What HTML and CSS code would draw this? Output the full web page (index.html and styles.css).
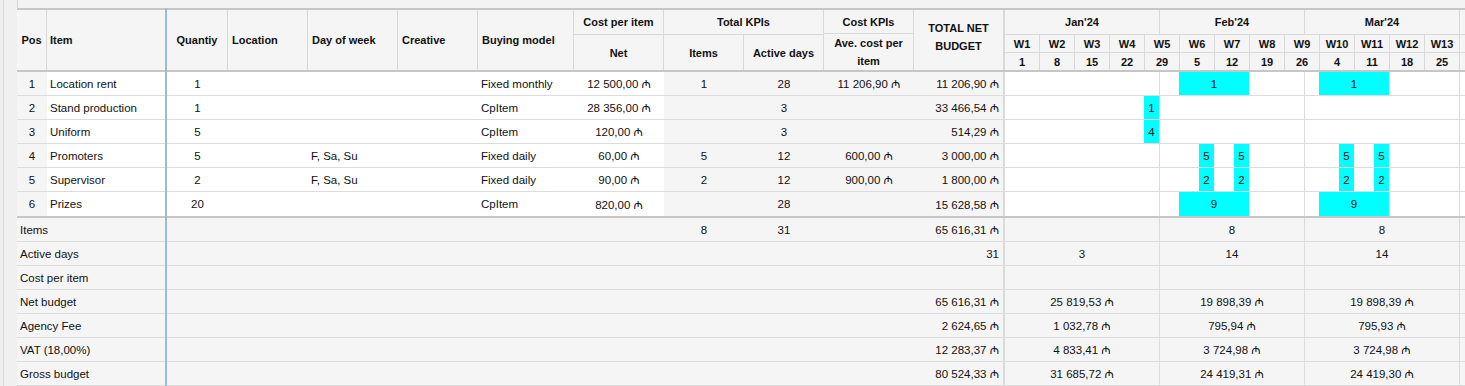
FILE: index.html
```html
<!DOCTYPE html>
<html lang="en">
<head>
<meta charset="utf-8">
<title>Media plan</title>
<link rel="stylesheet" href="styles.css">
</head>
<body>
<div class="app">
  <div class="gutter"></div>
  <div class="sheet">
    <div class="topstrip"></div>
    <div class="rule"><div class="rule-l"></div><div class="split"></div><div class="rule-r"></div></div>

    <div class="hdr">
      <div class="hc c-pos center"><span>Pos</span></div>
      <div class="hc c-item noborder"><span>Item</span></div>
      <div class="split"></div>
      <div class="hc c-qty center"><span>Quantiy</span></div>
      <div class="hc c-loc"><span>Location</span></div>
      <div class="hc c-dow"><span>Day of week</span></div>
      <div class="hc c-cre"><span>Creative</span></div>
      <div class="hc c-buy"><span>Buying model</span></div>
      <div class="grp">
        <div class="gtop c-cpi">Cost per item</div>
        <div class="gsub"><div class="hc c-cpi center"><span>Net</span></div></div>
      </div>
      <div class="grp">
        <div class="gtop c-kpi">Total KPIs</div>
        <div class="gsub">
          <div class="hc c-kit center"><span>Items</span></div>
          <div class="hc c-kday center"><span>Active days</span></div>
        </div>
      </div>
      <div class="grp">
        <div class="gtop c-ckpi">Cost KPIs</div>
        <div class="gsub"><div class="hc c-ckpi center"><span>Ave. cost per<br>item</span></div></div>
      </div>
      <div class="hc c-tot center total-h"><span>TOTAL NET<br>BUDGET</span></div>
      <div class="thead">
        <div class="tr tr-m">
          <div class="tm w31">Jan'24</div>
          <div class="tm w29">Feb'24</div>
          <div class="tm w31">Mar'24</div>
          <div class="tm w30"></div>
        </div>
        <div class="tr tr-w">
          <div class="wk">W1</div><div class="wk">W2</div><div class="wk">W3</div><div class="wk">W4</div><div class="wk">W5</div>
          <div class="wk">W6</div><div class="wk">W7</div><div class="wk">W8</div><div class="wk">W9</div>
          <div class="wk">W10</div><div class="wk">W11</div><div class="wk">W12</div><div class="wk">W13</div><div class="wk"></div>
        </div>
        <div class="tr tr-d">
          <div class="wk">1</div><div class="wk">8</div><div class="wk">15</div><div class="wk">22</div><div class="wk">29</div>
          <div class="wk">5</div><div class="wk">12</div><div class="wk">19</div><div class="wk">26</div>
          <div class="wk">4</div><div class="wk">11</div><div class="wk">18</div><div class="wk">25</div><div class="wk"></div>
        </div>
      </div>
    </div>

    <div class="rule"><div class="rule-l"></div><div class="split"></div><div class="rule-r"></div></div>

    <div class="body">
      <div class="row">
        <div class="dc c-pos g center">1</div>
        <div class="dc c-item">Location rent</div>
        <div class="split"></div>
        <div class="dc c-qty center">1</div>
        <div class="dc c-loc"></div>
        <div class="dc c-dow"></div>
        <div class="dc c-cre"></div>
        <div class="dc c-buy">Fixed monthly</div>
        <div class="dc c-cpi center">12 500,00 ₼</div>
        <div class="dc c-kit g center">1</div>
        <div class="dc c-kday g center">28</div>
        <div class="dc c-ckpi g center">11 206,90 ₼</div>
        <div class="dc c-tot g right">11 206,90 ₼</div>
        <div class="tl">
          <div class="mc m1"></div><div class="mc m2"></div><div class="mc m3"></div><div class="mc m4"></div>
          <div class="bar" style="grid-column: 36 / span 14">1</div>
          <div class="bar" style="grid-column: 64 / span 14">1</div>
        </div>
      </div>
      <div class="row">
        <div class="dc c-pos g center">2</div>
        <div class="dc c-item">Stand production</div>
        <div class="split"></div>
        <div class="dc c-qty center">1</div>
        <div class="dc c-loc"></div>
        <div class="dc c-dow"></div>
        <div class="dc c-cre"></div>
        <div class="dc c-buy">CpItem</div>
        <div class="dc c-cpi center">28 356,00 ₼</div>
        <div class="dc c-kit g center"></div>
        <div class="dc c-kday g center">3</div>
        <div class="dc c-ckpi g center"></div>
        <div class="dc c-tot g right">33 466,54 ₼</div>
        <div class="tl">
          <div class="mc m1"></div><div class="mc m2"></div><div class="mc m3"></div><div class="mc m4"></div>
          <div class="bar" style="grid-column: 29 / span 3">1</div>
        </div>
      </div>
      <div class="row">
        <div class="dc c-pos g center">3</div>
        <div class="dc c-item">Uniform</div>
        <div class="split"></div>
        <div class="dc c-qty center">5</div>
        <div class="dc c-loc"></div>
        <div class="dc c-dow"></div>
        <div class="dc c-cre"></div>
        <div class="dc c-buy">CpItem</div>
        <div class="dc c-cpi center">120,00 ₼</div>
        <div class="dc c-kit g center"></div>
        <div class="dc c-kday g center">3</div>
        <div class="dc c-ckpi g center"></div>
        <div class="dc c-tot g right">514,29 ₼</div>
        <div class="tl">
          <div class="mc m1"></div><div class="mc m2"></div><div class="mc m3"></div><div class="mc m4"></div>
          <div class="bar" style="grid-column: 29 / span 3">4</div>
        </div>
      </div>
      <div class="row">
        <div class="dc c-pos g center">4</div>
        <div class="dc c-item">Promoters</div>
        <div class="split"></div>
        <div class="dc c-qty center">5</div>
        <div class="dc c-loc"></div>
        <div class="dc c-dow">F, Sa, Su</div>
        <div class="dc c-cre"></div>
        <div class="dc c-buy">Fixed daily</div>
        <div class="dc c-cpi center">60,00 ₼</div>
        <div class="dc c-kit g center">5</div>
        <div class="dc c-kday g center">12</div>
        <div class="dc c-ckpi g center">600,00 ₼</div>
        <div class="dc c-tot g right">3 000,00 ₼</div>
        <div class="tl">
          <div class="mc m1"></div><div class="mc m2"></div><div class="mc m3"></div><div class="mc m4"></div>
          <div class="bar" style="grid-column: 40 / span 3">5</div>
          <div class="bar" style="grid-column: 47 / span 3">5</div>
          <div class="bar" style="grid-column: 68 / span 3">5</div>
          <div class="bar" style="grid-column: 75 / span 3">5</div>
        </div>
      </div>
      <div class="row">
        <div class="dc c-pos g center">5</div>
        <div class="dc c-item">Supervisor</div>
        <div class="split"></div>
        <div class="dc c-qty center">2</div>
        <div class="dc c-loc"></div>
        <div class="dc c-dow">F, Sa, Su</div>
        <div class="dc c-cre"></div>
        <div class="dc c-buy">Fixed daily</div>
        <div class="dc c-cpi center">90,00 ₼</div>
        <div class="dc c-kit g center">2</div>
        <div class="dc c-kday g center">12</div>
        <div class="dc c-ckpi g center">900,00 ₼</div>
        <div class="dc c-tot g right">1 800,00 ₼</div>
        <div class="tl">
          <div class="mc m1"></div><div class="mc m2"></div><div class="mc m3"></div><div class="mc m4"></div>
          <div class="bar" style="grid-column: 40 / span 3">2</div>
          <div class="bar" style="grid-column: 47 / span 3">2</div>
          <div class="bar" style="grid-column: 68 / span 3">2</div>
          <div class="bar" style="grid-column: 75 / span 3">2</div>
        </div>
      </div>
      <div class="row">
        <div class="dc c-pos g center">6</div>
        <div class="dc c-item">Prizes</div>
        <div class="split"></div>
        <div class="dc c-qty center">20</div>
        <div class="dc c-loc"></div>
        <div class="dc c-dow"></div>
        <div class="dc c-cre"></div>
        <div class="dc c-buy">CpItem</div>
        <div class="dc c-cpi center">820,00 ₼</div>
        <div class="dc c-kit g center"></div>
        <div class="dc c-kday g center">28</div>
        <div class="dc c-ckpi g center"></div>
        <div class="dc c-tot g right">15 628,58 ₼</div>
        <div class="tl">
          <div class="mc m1"></div><div class="mc m2"></div><div class="mc m3"></div><div class="mc m4"></div>
          <div class="bar" style="grid-column: 36 / span 14">9</div>
          <div class="bar" style="grid-column: 64 / span 14">9</div>
        </div>
      </div>
    </div>

    <div class="rule"><div class="rule-l"></div><div class="split"></div><div class="rule-r"></div></div>

    <div class="summary">
      <div class="row">
        <div class="dc c-lbl">Items</div>
        <div class="split"></div>
        <div class="dc c-mid"></div>
        <div class="dc c-kit center">8</div>
        <div class="dc c-kday center">31</div>
        <div class="dc c-ckpi"></div>
        <div class="dc c-tot right">65 616,31 ₼</div>
        <div class="tl">
          <div class="mc m1"></div><div class="mc m2">8</div><div class="mc m3">8</div><div class="mc m4"></div>
        </div>
      </div>
      <div class="row">
        <div class="dc c-lbl">Active days</div>
        <div class="split"></div>
        <div class="dc c-mid"></div>
        <div class="dc c-kit"></div>
        <div class="dc c-kday"></div>
        <div class="dc c-ckpi"></div>
        <div class="dc c-tot right">31</div>
        <div class="tl">
          <div class="mc m1">3</div><div class="mc m2">14</div><div class="mc m3">14</div><div class="mc m4"></div>
        </div>
      </div>
      <div class="row">
        <div class="dc c-lbl">Cost per item</div>
        <div class="split"></div>
        <div class="dc c-mid"></div>
        <div class="dc c-kit"></div>
        <div class="dc c-kday"></div>
        <div class="dc c-ckpi"></div>
        <div class="dc c-tot right"></div>
        <div class="tl">
          <div class="mc m1"></div><div class="mc m2"></div><div class="mc m3"></div><div class="mc m4"></div>
        </div>
      </div>
      <div class="row">
        <div class="dc c-lbl">Net budget</div>
        <div class="split"></div>
        <div class="dc c-mid"></div>
        <div class="dc c-kit"></div>
        <div class="dc c-kday"></div>
        <div class="dc c-ckpi"></div>
        <div class="dc c-tot right">65 616,31 ₼</div>
        <div class="tl">
          <div class="mc m1">25 819,53 ₼</div><div class="mc m2">19 898,39 ₼</div><div class="mc m3">19 898,39 ₼</div><div class="mc m4"></div>
        </div>
      </div>
      <div class="row">
        <div class="dc c-lbl">Agency Fee</div>
        <div class="split"></div>
        <div class="dc c-mid"></div>
        <div class="dc c-kit"></div>
        <div class="dc c-kday"></div>
        <div class="dc c-ckpi"></div>
        <div class="dc c-tot right">2 624,65 ₼</div>
        <div class="tl">
          <div class="mc m1">1 032,78 ₼</div><div class="mc m2">795,94 ₼</div><div class="mc m3">795,93 ₼</div><div class="mc m4"></div>
        </div>
      </div>
      <div class="row">
        <div class="dc c-lbl">VAT (18,00%)</div>
        <div class="split"></div>
        <div class="dc c-mid"></div>
        <div class="dc c-kit"></div>
        <div class="dc c-kday"></div>
        <div class="dc c-ckpi"></div>
        <div class="dc c-tot right">12 283,37 ₼</div>
        <div class="tl">
          <div class="mc m1">4 833,41 ₼</div><div class="mc m2">3 724,98 ₼</div><div class="mc m3">3 724,98 ₼</div><div class="mc m4"></div>
        </div>
      </div>
      <div class="row">
        <div class="dc c-lbl">Gross budget</div>
        <div class="split"></div>
        <div class="dc c-mid"></div>
        <div class="dc c-kit"></div>
        <div class="dc c-kday"></div>
        <div class="dc c-ckpi"></div>
        <div class="dc c-tot right">80 524,33 ₼</div>
        <div class="tl">
          <div class="mc m1">31 685,72 ₼</div><div class="mc m2">24 419,31 ₼</div><div class="mc m3">24 419,30 ₼</div><div class="mc m4"></div>
        </div>
      </div>
    </div>
  </div>
</div>
</body>
</html>
```

FILE: styles.css
```css
* { box-sizing: border-box; }
html, body { margin: 0; padding: 0; }
body {
  width: 1465px;
  height: 386px;
  overflow: hidden;
  background: #f0f0f0;
  font-family: "Liberation Sans", "Noto Sans", "DejaVu Sans", sans-serif;
  font-size: 11.5px;
  color: #111;
}

.app { display: flex; height: 386px; }

.gutter {
  flex: none;
  width: 14px;
  margin-left: 3px;
  border-left: 1px solid #dadada;
  background: #f0f0f0;
}

.sheet { flex: none; width: max-content; background: #fff; }

.topstrip {
  height: 8px;
  background: #f3f3f3;
  border-left: 1px solid #d6d6d6;
}

.rule { display: flex; height: 2px; }
.rule-l { flex: none; width: 148px; background: #c6c6c6; }
.rule-r { flex: 1; background: #c6c6c6; }

.split { flex: none; width: 2px; background: #9dbad7; }

/* column widths */
.c-pos { width: 30px; }
.c-item { width: 118px; }
.c-lbl { width: 148px; }
.c-qty { width: 61px; }
.c-loc { width: 80px; }
.c-dow { width: 90px; }
.c-cre { width: 80px; }
.c-buy { width: 96px; }
.c-cpi { width: 90px; }
.c-kpi { width: 160px; }
.c-kit { width: 80px; }
.c-kday { width: 80px; }
.c-ckpi { width: 90px; }
.c-tot { width: 90px; }
.c-mid { width: 497px; }

/* header */
.hdr {
  display: flex;
  height: 60px;
  background: #f5f5f5;
  font-weight: bold;
  font-size: 11px;
  color: #111;
}
.hc {
  flex: none;
  display: flex;
  align-items: center;
  padding: 0 4px;
  line-height: 18px;
  border-right: 1px solid #d9d9d9;
  white-space: nowrap;
}
.hc.c-item { padding-left: 3px; }
.hc.noborder { border-right: 0; }
.center { justify-content: center; text-align: center; }
.right { justify-content: flex-end; }
.total-h { padding-bottom: 6px; }

.grp { flex: none; display: flex; flex-direction: column; }
.gtop {
  height: 25px;
  display: flex;
  align-items: center;
  justify-content: center;
  border-right: 1px solid #d9d9d9;
  border-bottom: 1px solid #d9d9d9;
}
.gsub { flex: 1; display: flex; }
.gsub .hc { padding: 0 2px; }

.thead { flex: none; display: flex; flex-direction: column; }
.tr { display: flex; }
.tr-m { height: 25px; }
.tr-w { height: 18px; }
.tr-d { height: 17px; }
.tm, .wk {
  flex: none;
  display: flex;
  align-items: center;
  justify-content: center;
  border-left: 1px solid #d9d9d9;
}
.tm { border-bottom: 1px solid #d9d9d9; }
.tr-w .wk { border-bottom: 1px solid #d9d9d9; }
.wk { width: 35px; }
.w31 { width: 155px; }
.w29 { width: 145px; }
.w30 { width: 150px; }

/* body rows */
.row { display: flex; height: 24px; }
.dc {
  flex: none;
  display: flex;
  align-items: center;
  padding: 0 3px;
  white-space: nowrap;
  border-bottom: 1px solid #dcdcdc;
}
.dc.c-tot { border-right: 1px solid #d9d9d9; padding-right: 4px; }
.g { background: #f5f5f5; }
.body .row:last-child .dc,
.body .row:last-child .tl { border-bottom: 0; }

.tl {
  flex: none;
  display: grid;
  grid-template-columns: repeat(121, 5px);
  grid-template-rows: 1fr;
  border-bottom: 1px solid #dcdcdc;
}
.mc {
  grid-row: 1;
  display: flex;
  align-items: center;
  justify-content: center;
  white-space: nowrap;
  border-left: 1px solid #dcdcdc;
}
.m1 { grid-column: 1 / span 31; }
.m2 { grid-column: 32 / span 29; }
.m3 { grid-column: 61 / span 31; }
.m4 { grid-column: 92 / span 30; }
.bar {
  grid-row: 1;
  display: flex;
  align-items: center;
  justify-content: center;
  background: #00ffff;
  color: #111;
}

/* summary */
.summary .row { background: #f5f5f5; }
.dc.c-lbl { padding-left: 3px; }
```
